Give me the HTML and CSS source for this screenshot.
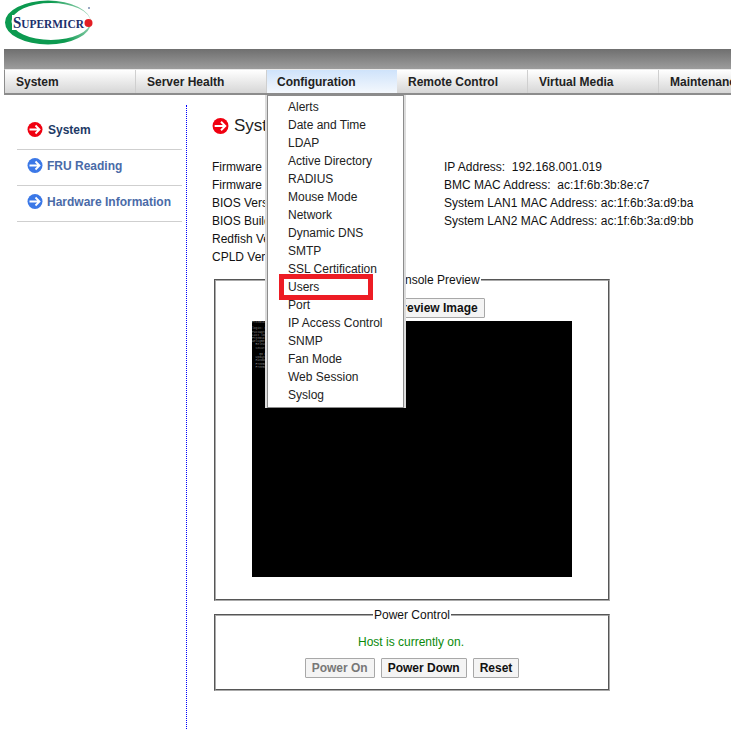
FILE: index.html
```html
<!DOCTYPE html>
<html lang="en">
<head>
    <meta charset="UTF-8">
    <title>Supermicro BMC</title>
    <link rel="stylesheet" href="styles.css">
</head>
<body>

    <header class="logo-row">
        <svg class="logo" width="100" height="46" viewBox="0 0 100 46">
            <defs>
                <linearGradient id="ring" x1="0" x2="1" y1="0.5" y2="0.3">
                    <stop offset="0.6" stop-color="#0c9a50"/>
                    <stop offset="1" stop-color="#a5d8bc"/>
                </linearGradient>
            </defs>
            <path fill-rule="evenodd" fill="url(#ring)" d="M5 22.5A43 22 0 1 1 91 22.5A43 22 0 1 1 5 22.5ZM11.5 21.5A39.5 18.5 0 1 0 90.5 21.5A39.5 18.5 0 1 0 11.5 21.5Z"/>
            <rect x="12" y="15" width="72" height="15" fill="#fff"/>
            <circle cx="88.5" cy="23" r="4" fill="#e31e24"/>
            <circle cx="89" cy="8" r="1" fill="#7a8db0"/>
            <text class="logo-text" x="13" y="28" textLength="71" lengthAdjust="spacingAndGlyphs"><tspan class="logo-big">S</tspan>UPERMICR</text>
        </svg>
    </header>

    <div class="top-bar"></div>

    <nav class="menu">
        <div class="menu-item">System</div>
        <div class="menu-item">Server Health</div>
        <div class="menu-item menu-active">Configuration</div>
        <div class="menu-item">Remote Control</div>
        <div class="menu-item">Virtual Media</div>
        <div class="menu-item">Maintenance</div>
    </nav>

    <div class="dropdown">
        <div>Alerts</div>
        <div>Date and Time</div>
        <div>LDAP</div>
        <div>Active Directory</div>
        <div>RADIUS</div>
        <div>Mouse Mode</div>
        <div>Network</div>
        <div>Dynamic DNS</div>
        <div>SMTP</div>
        <div>SSL Certification</div>
        <div>Users</div>
        <div>Port</div>
        <div>IP Access Control</div>
        <div>SNMP</div>
        <div>Fan Mode</div>
        <div>Web Session</div>
        <div>Syslog</div>
    </div>
    <div class="highlight"></div>

    <div class="page">
        <aside class="sidebar">
            <a class="side-link side-active">
                <svg class="arrow" width="16" height="15" viewBox="0 0 16 15"><circle cx="8" cy="7.5" r="7.5" fill="#f00010"/><path d="M2.5 7.5H12.5M8.5 3.5L12.5 7.5 8.5 11.5" fill="none" stroke="#fff" stroke-width="1.8"/></svg>
                System
            </a>
            <a class="side-link">
                <svg class="arrow" width="16" height="15" viewBox="0 0 16 15"><circle cx="8" cy="7.5" r="7.5" fill="#3b78e7"/><path d="M2.5 7.5H12.5M8.5 3.5L12.5 7.5 8.5 11.5" fill="none" stroke="#fff" stroke-width="1.8"/></svg>
                FRU Reading
            </a>
            <a class="side-link">
                <svg class="arrow" width="16" height="15" viewBox="0 0 16 15"><circle cx="8" cy="7.5" r="7.5" fill="#3b78e7"/><path d="M2.5 7.5H12.5M8.5 3.5L12.5 7.5 8.5 11.5" fill="none" stroke="#fff" stroke-width="1.8"/></svg>
                Hardware Information
            </a>
        </aside>

        <main class="content">
            <h1 class="title">
                <svg width="17" height="16" viewBox="0 0 16 15"><circle cx="8" cy="7.5" r="7.5" fill="#f00010"/><path d="M2.5 7.5H12.5M8.5 3.5L12.5 7.5 8.5 11.5" fill="none" stroke="#fff" stroke-width="1.8"/></svg>
                System
            </h1>

            <div class="info">
                <div class="info-col info-left">
                    <div>Firmware Revision : 01.71.17</div>
                    <div>Firmware Build Time : 10/05/2020</div>
                    <div>BIOS Version : 3.2</div>
                    <div>BIOS Build Time : 10/15/2019</div>
                    <div>Redfish Version : 1.0.1</div>
                    <div>CPLD Version : 02.b6.04</div>
                </div>
                <div class="info-col">
                    <div>IP Address:&nbsp; 192.168.001.019</div>
                    <div>BMC MAC Address:&nbsp; ac:1f:6b:3b:8e:c7</div>
                    <div>System LAN1 MAC Address: ac:1f:6b:3a:d9:ba</div>
                    <div>System LAN2 MAC Address: ac:1f:6b:3a:d9:bb</div>
                </div>
            </div>

            <fieldset class="box box-preview">
                <legend>Remote Console Preview</legend>
                <button class="btn">Refresh Preview Image</button>
                <div class="screen">
                    <pre class="screen-text">FreeBSD/amd64 (fw) (ttyv0)

login: root
Password:
Last login: Mon Oct 5
FreeBSD 11.2-RELEASE
Welcome to FreeBSD!
  Release Notes, Errata
  Security Advisories

    80 80 80
  Updates and patches
  Handbook: manual
  FreeBSD Forums list
  FreeBSD/amd64 (fw)</pre>
                </div>
            </fieldset>

            <fieldset class="box box-power">
                <legend>Power Control</legend>
                <p class="status">Host is currently on.</p>
                <div class="btn-row">
                    <button class="btn btn-off">Power On</button>
                    <button class="btn">Power Down</button>
                    <button class="btn">Reset</button>
                </div>
            </fieldset>
        </main>
    </div>

</body>
</html>
```

FILE: styles.css
```css
html, body {
    height: 729px;
    overflow: hidden;
}

body {
    margin: 0;
    background-color: #fff;
    color: #111;
    font-family: "Liberation Sans", Arial, sans-serif;
    font-size: 12px;
    position: relative;
}

.logo-row {
    height: 49px;
}

.logo {
    display: block;
}

.logo-text {
    font-family: "Liberation Serif", serif;
    font-size: 13px;
    fill: #1b2f6b;
    font-weight: bold;
}

.logo-big {
    font-size: 17px;
}

.top-bar {
    height: 20px;
    margin-left: 4px;
    background: linear-gradient(#6f6f6f, #9c9c9c);
}

.menu {
    display: flex;
    height: 23px;
    margin-left: 4px;
    border: 1px solid #8c8c8c;
    border-right: none;
    border-top-color: #e8e8e8;
    border-bottom-width: 2px;
    white-space: nowrap;
}

.menu-item {
    flex: 0 0 131px;
    box-sizing: border-box;
    padding: 0 0 0 11px;
    line-height: 25px;
    font-weight: bold;
    color: #222;
    background: linear-gradient(#fff, #d6d6d6);
    border-right: 1px solid #cfcfcf;
}

.menu-active {
    flex-basis: 130px;
    background: linear-gradient(#cfe3fb, #f4f8fd);
    padding-left: 10px;
    border-right: none;
}

.dropdown {
    position: absolute;
    left: 267px;
    top: 95px;
    width: 135px;
    height: 309px;
    padding-top: 2px;
    border: 1px solid #8c8c8c;
    background-color: #fff;
    box-shadow: 2px 0 0 #dcdcdc, -2px 0 0 #dcdcdc;
    z-index: 2;
}

.dropdown div {
    height: 18px;
    line-height: 18px;
    padding-left: 20px;
    color: #222;
}

.highlight {
    position: absolute;
    left: 279px;
    top: 274px;
    width: 84px;
    height: 16px;
    border: 5px solid #ed1c24;
    z-index: 3;
}

.page {
    display: flex;
    margin-top: 10px;
}

.sidebar {
    box-sizing: border-box;
    width: 187px;
    height: 624px;
    padding: 9px 4px 0 17px;
    border-right: 1px dotted #0000ff;
}

.side-link {
    display: flex;
    align-items: center;
    gap: 4px;
    box-sizing: border-box;
    height: 36px;
    padding: 0 0 4px 10px;
    border-bottom: 1px solid #cfcfcf;
    font-weight: bold;
    color: #4a6ba8;
}

.side-active {
    color: #1d3a66;
    gap: 5px;
}

.content {
    flex: 1;
    padding: 9px 0 0 25px;
    min-width: 0;
}

.title {
    display: flex;
    align-items: center;
    gap: 5px;
    margin: 0;
    height: 24px;
    font-size: 17px;
    font-weight: normal;
    color: #222;
}

.info {
    display: flex;
    margin-top: 20px;
    height: 108px;
    line-height: 18px;
}

.info-col {
    white-space: nowrap;
}

.info-left {
    width: 232px;
}

.box {
    margin: 0 0 0 2px;
    padding: 0;
    width: 392px;
    box-sizing: content-box;
    border: 2px groove #aaa;
    text-align: center;
    min-width: 0;
}

.box legend {
    padding: 0 1px;
    font-size: 12px;
    line-height: 14px;
}

.box-preview {
    margin-top: 7px;
    height: 324px;
}

.btn {
    font-family: "Liberation Sans", Arial, sans-serif;
    font-size: 12px;
    font-weight: bold;
    color: #111;
    height: 20px;
    padding: 0 6px;
    background-color: #f4f4f4;
    border: 1px solid #a8a8a8;
    border-radius: 1px;
}

.box-preview .btn {
    display: block;
    margin: 11px auto 0;
}

.screen {
    width: 320px;
    height: 256px;
    margin: 3px 0 0 36px;
    background-color: #000;
    overflow: hidden;
}

.screen-text {
    margin: 0;
    font-family: "Liberation Mono", monospace;
    font-size: 3px;
    line-height: 3.2px;
    color: #808080;
    text-align: left;
}

.box-power {
    margin-top: 7px;
    height: 79px;
}

.status {
    margin: 13px 0 9px;
    padding-right: 2px;
    line-height: 14px;
    color: #0a8a0a;
}

.btn-row {
    display: flex;
    justify-content: center;
    gap: 6px;
}

.btn-off {
    color: #777;
}
```
